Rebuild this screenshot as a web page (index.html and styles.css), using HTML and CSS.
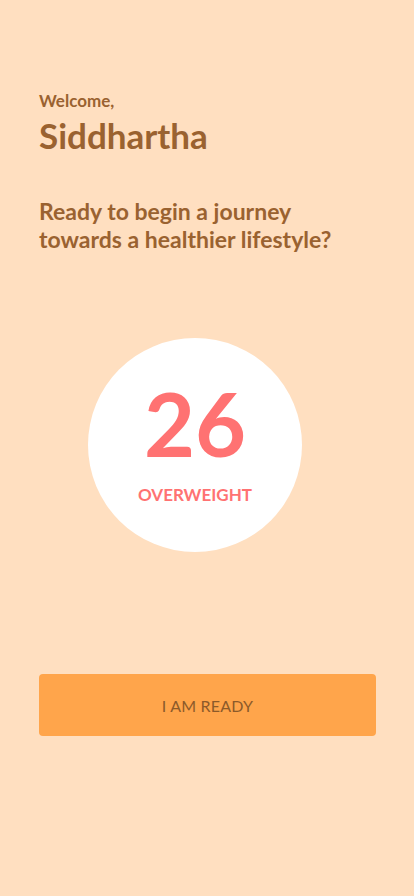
FILE: index.html
```html
<!DOCTYPE html>
<html lang="en">
<head>
<meta charset="utf-8">
<title>Welcome</title>
<link rel="stylesheet" href="styles.css">
</head>
<body>
<main class="screen">
  <header class="greeting">
    <p class="welcome">Welcome,</p>
    <h1 class="name">Siddhartha</h1>
  </header>
  <p class="tagline">Ready to begin a journey towards a healthier lifestyle?</p>
  <section class="bmi">
    <div class="bmi-circle">
      <span class="bmi-value">26</span>
      <span class="bmi-label">OVERWEIGHT</span>
    </div>
  </section>
  <button class="ready-btn" type="button">I AM READY</button>
</main>
</body>
</html>
```
FILE: styles.css
```css
html, body {
  margin: 0;
  padding: 0;
  background: #FFDFC0;
}
body {
  font-family: Lato, "Open Sans", sans-serif;
  color: #9A6230;
}
.screen {
  width: 414px;
  height: 896px;
  box-sizing: border-box;
  padding: 91px 38px 0 39px;
  display: flex;
  flex-direction: column;
}
.greeting {
  display: flex;
  flex-direction: column;
}
.welcome {
  margin: 0;
  font-size: 17px;
  font-weight: 700;
  line-height: 20px;
}
.name {
  margin: 4px 0 0;
  font-size: 35px;
  font-weight: 700;
  line-height: 40px;
}
.tagline {
  margin: 42px 0 0;
  font-size: 23px;
  font-weight: 700;
  line-height: 28px;
  width: 310px;
}
.bmi {
  display: flex;
  justify-content: flex-start;
  margin-top: 85px;
  padding-left: 49px;
}
.bmi-circle {
  width: 214px;
  height: 214px;
  border-radius: 50%;
  background: #FFFFFF;
  display: flex;
  flex-direction: column;
  align-items: center;
  color: #FF7272;
}
.bmi-value {
  margin-top: 41px;
  font-size: 88px;
  font-weight: 700;
  line-height: 88px;
}
.bmi-label {
  margin-top: 18px;
  font-size: 17px;
  font-weight: 700;
  line-height: 20px;
}
.ready-btn {
  margin-top: 122px;
  height: 62px;
  width: 337px;
  border: none;
  border-radius: 4px;
  background: #FFA54B;
  color: #8C5A2A;
  font-family: Lato, "Open Sans", sans-serif;
  font-size: 16px;
  font-weight: 400;
  letter-spacing: 0.2px;
}
```
